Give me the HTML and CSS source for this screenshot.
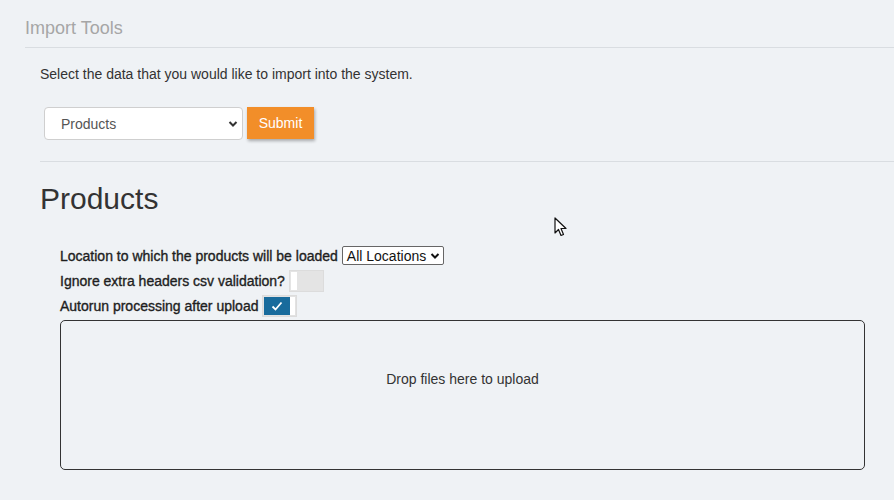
FILE: index.html
```html
<!DOCTYPE html>
<html>
<head>
<meta charset="utf-8">
<link rel="stylesheet" href="styles.css">
</head>
<body>
<div class="page">
  <h1 class="page-title">Import Tools</h1>
  <hr class="rule">
  <div class="content">
    <p class="intro">Select the data that you would like to import into the system.</p>
    <div class="picker">
      <div class="select-box">
        <span>Products</span>
        <svg class="chev" width="10" height="8" viewBox="0 0 10 8"><path d="M1.5 2 L5 5.5 L8.5 2" fill="none" stroke="#333" stroke-width="2"/></svg>
      </div>
      <button class="btn-submit">Submit</button>
    </div>
    <hr class="rule">
    <h2 class="section-title">Products</h2>
    <div class="options">
      <div class="opt-row">
        <span class="opt-label">Location to which the products will be loaded</span>
        <div class="loc-select">
          <span>All Locations</span>
          <svg width="10" height="8" viewBox="0 0 10 8"><path d="M1.5 2 L5 5.5 L8.5 2" fill="none" stroke="#111" stroke-width="2"/></svg>
        </div>
      </div>
      <div class="opt-row">
        <span class="opt-label">Ignore extra headers csv validation?</span>
        <div class="toggle"><span class="knob"></span></div>
      </div>
      <div class="opt-row">
        <span class="opt-label">Autorun processing after upload</span>
        <div class="toggle on">
          <span class="track-on"><svg width="12" height="10" viewBox="0 0 12 10"><path d="M1.5 5.5 L4.5 8.5 L10.5 1.5" fill="none" stroke="#fff" stroke-width="1.8"/></svg></span>
          <span class="knob"></span>
        </div>
      </div>
    </div>
    <div class="dropzone">Drop files here to upload</div>
  </div>
  <svg class="cursor" width="14" height="21" viewBox="0 0 14 21"><path d="M1 1 L1 16 L4.5 12.5 L7 18.5 L9.5 17.5 L7 11.5 L12 11.5 Z" fill="#fff" stroke="#111" stroke-width="1.2" stroke-linejoin="round"/></svg>
</div>
</body>
</html>
```
FILE: styles.css
```css
html, body {
  margin: 0;
  padding: 0;
  background: #eff2f5;
}
body {
  font-family: "Liberation Sans", Arial, sans-serif;
  font-size: 14px;
  color: #333;
  width: 894px;
  height: 500px;
  overflow: hidden;
}
.page {
  position: relative;
  padding-left: 25px;
}
.page-title {
  margin: 0;
  padding-top: 18px;
  font-size: 18px;
  line-height: 20px;
  font-weight: normal;
  color: #a6a6a6;
}
.rule {
  margin: 9px 0 0 0;
  border: 0;
  border-top: 1px solid #d9dde1;
  height: 0;
}
.content {
  padding-left: 15px;
}
.intro {
  margin: 16px 0 0 0;
  line-height: 20px;
  color: #333;
}
.picker {
  display: flex;
  align-items: flex-start;
  gap: 4px;
  margin-top: 23px;
  padding-left: 4px;
}
.select-box {
  box-sizing: border-box;
  width: 199px;
  height: 33px;
  background: #fff;
  border: 1px solid #cfcfcf;
  border-radius: 4px;
  display: flex;
  align-items: center;
  justify-content: space-between;
  padding: 0 4px 0 16px;
  color: #555;
}
.btn-submit {
  box-sizing: border-box;
  height: 32px;
  width: 67px;
  border: 0;
  background: #f28e29;
  color: #fff;
  font-family: inherit;
  font-size: 14px;
  padding: 0;
  box-shadow: 1px 2px 3px rgba(0, 0, 0, 0.3);
}
.content .rule {
  margin-top: 21px;
}
.section-title {
  margin: 19px 0 0 0;
  font-size: 30px;
  line-height: 36px;
  font-weight: normal;
  color: #333;
}
.options {
  margin-top: 26px;
  padding-left: 20px;
}
.opt-row {
  height: 25px;
  display: flex;
  align-items: center;
  gap: 4px;
}
.opt-label {
  font-size: 14px;
  font-weight: normal;
  color: #1e1e1e;
  -webkit-text-stroke: 0.35px #1e1e1e;
}
.loc-select {
  box-sizing: border-box;
  height: 19px;
  width: 102px;
  border: 1px solid #666;
  border-radius: 2px;
  background: #fff;
  display: flex;
  align-items: center;
  justify-content: space-between;
  padding: 0 3px 0 4px;
  color: #111;
}
.toggle {
  box-sizing: border-box;
  width: 35px;
  height: 22px;
  background: #e4e4e4;
  border: 1px solid #dcdcdc;
  padding: 1px;
  display: flex;
}
.toggle .knob {
  width: 6px;
  background: #fff;
}
.toggle.on {
  background: #e2e2e2;
}
.toggle.on .knob {
  width: 5px;
}
.track-on {
  width: 26px;
  background: #186b9c;
  display: flex;
  align-items: center;
  justify-content: center;
}
.dropzone {
  box-sizing: border-box;
  margin: 2px 29px 0 20px;
  height: 150px;
  border: 1px solid #333;
  border-radius: 5px;
  padding-top: 48px;
  line-height: 20px;
  text-align: center;
  color: #333;
}
.cursor {
  position: absolute;
  left: 554px;
  top: 217px;
}
```
